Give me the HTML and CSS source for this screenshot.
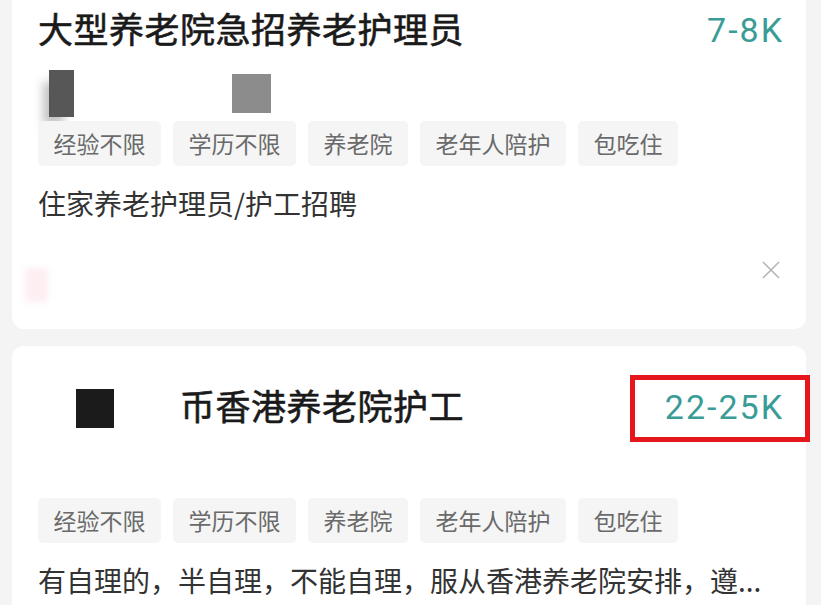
FILE: index.html
```html
<!DOCTYPE html>
<html lang="zh-CN">
<head>
  <meta charset="UTF-8" />
  <meta name="viewport" content="width=device-width, initial-scale=1.0"/>
  <title>职位列表</title>
  <link rel="stylesheet" href="styles.css">
</head>
<body>
  <!-- Job list -->
  <div class="job-list">

    <!-- Card 1 -->
    <div class="job-card first">
      <div class="job-head">
        <h2 class="job-title">大型养老院急招养老护理员</h2>
        <span class="salary">7-8K</span>
      </div>
      <div class="job-meta">
        <span class="blur blur-dark"></span>
        <span class="blur blur-gray"></span>
      </div>
      <ul class="tags">
        <li>经验不限</li>
        <li>学历不限</li>
        <li>养老院</li>
        <li>老年人陪护</li>
        <li>包吃住</li>
      </ul>
      <p class="desc">住家养老护理员/护工招聘</p>
      <div class="job-foot">
        <span class="blur blur-pink"></span>
        <svg class="close-icon" viewBox="0 0 18 18" width="18" height="18">
          <path d="M1 1 L17 17 M17 1 L1 17" stroke="#b4b4b4" stroke-width="1.6" fill="none"/>
        </svg>
      </div>
    </div>

    <!-- Card 2 -->
    <div class="job-card">
      <div class="job-head">
        <h2 class="job-title"><span class="redact"></span><span class="title-text">币香港养老院护工</span></h2>
        <span class="salary">22-25K</span>
      </div>
      <div class="job-meta"></div>
      <ul class="tags">
        <li>经验不限</li>
        <li>学历不限</li>
        <li>养老院</li>
        <li>老年人陪护</li>
        <li>包吃住</li>
      </ul>
      <p class="desc">有自理的，半自理，不能自理，服从香港养老院安排，遵...</p>
      <div class="mark"></div>
    </div>

  </div>
</body>
</html>
```

FILE: styles.css
```css
/* Global Styles */
body {
  margin: 0;
  background: #f4f4f4;
  font-family: "Noto Sans CJK SC", "Noto Sans", sans-serif;
  color: #1f1f1f;
  overflow: hidden;
}

.job-list {
  display: flex;
  flex-direction: column;
  gap: 17px;
  margin-top: -31px;
  padding: 0 15px 0 12px;
}

/* Card */
.job-card {
  position: relative;
  background: #fff;
  border-radius: 12px;
  padding: 34px 24px 28px 26px;
}

.job-head {
  display: flex;
  justify-content: space-between;
  align-items: center;
  height: 50px;
}

.job-title {
  margin: 0;
  display: flex;
  align-items: center;
  font-size: 35px;
  font-weight: 400;
  -webkit-text-stroke: 0.6px #1a1a1a;
  letter-spacing: 0.5px;
  line-height: 50px;
  color: #1a1a1a;
}

.redact {
  width: 38px;
  height: 39px;
  margin-left: 38px;
  margin-top: 6px;
  background: #1b1b1b;
}

.title-text {
  margin-left: 66px;
}

.salary {
  font-family: Roboto, "Liberation Sans", sans-serif;
  font-size: 34px;
  font-weight: 400;
  letter-spacing: 2px;
  margin-right: -2px;
  color: #3a9c96;
  padding-top: 4px;
}

/* Blurred info row */
.job-meta {
  display: flex;
  align-items: flex-start;
  height: 47px;
  margin: 17px 0 4px;
}

.blur {
  display: block;
}

.blur-dark {
  width: 25px;
  height: 47px;
  margin-left: 11px;
  background: #575757;
  box-shadow: -8px 10px 10px -2px rgba(80, 80, 80, 0.35);
}

.blur-gray {
  width: 39px;
  height: 39px;
  margin-left: 158px;
  margin-top: 4px;
  background: #8c8c8c;
}

/* Tags */
.tags {
  display: flex;
  gap: 12px;
  margin: 0;
  padding: 0;
  list-style: none;
}

.tags li {
  height: 45px;
  line-height: 45px;
  padding: 0 15.5px;
  border-radius: 5px;
  background: #f5f5f5;
  color: #6a6a6a;
  font-size: 23px;
}

.desc {
  margin: 17px 0 0;
  font-size: 28px;
  line-height: 40px;
  color: #333;
  white-space: nowrap;
}

/* Footer row */
.job-foot {
  display: flex;
  justify-content: space-between;
  align-items: center;
  height: 70px;
  margin-top: 8px;
  padding-top: 8px;
  box-sizing: border-box;
}

.blur-pink {
  width: 23px;
  height: 34px;
  margin-left: -13px;
  margin-top: 30px;
  background: #fdeef2;
  filter: blur(3px);
}

.close-icon {
  margin-right: 2px;
}

/* Red highlight box */
.mark {
  position: absolute;
  top: 29px;
  left: 618px;
  width: 170px;
  height: 57px;
  border: 5px solid #e5161c;
}
```
